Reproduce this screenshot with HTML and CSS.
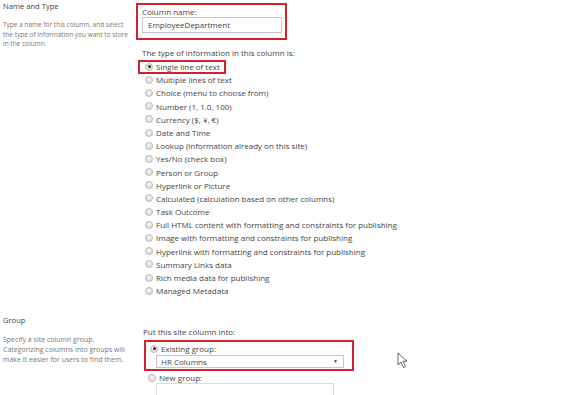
FILE: index.html
```
<!DOCTYPE html>
<html lang="en">
<head>
  <meta charset="UTF-8">
  <title>Create Column</title>
  <link rel="stylesheet" href="styles.css">
</head>
<body>
  <div class="page">
    <!-- name and type -->
    <div class="section">
      <div class="desc">
        <h3 class="descTitle">Name and Type</h3>
        <p class="descText">Type a name for this column, and select the type of information you want to store in the column.</p>
      </div>
      <div class="fields">
        <div class="hl nameBox">
          <div class="fieldLabel">Column name:</div>
          <div class="textInput">EmployeeDepartment</div>
        </div>
        <div class="fieldLabel typeLabel">The type of information in this column is:</div>
        <ul class="radioList">
          <li><span class="hl hlRadio"><span class="radio checked"></span>Single line of text</span></li>
          <li><span class="radio"></span>Multiple lines of text</li>
          <li><span class="radio"></span>Choice (menu to choose from)</li>
          <li><span class="radio"></span>Number (1, 1.0, 100)</li>
          <li><span class="radio"></span>Currency ($, ¥, €)</li>
          <li><span class="radio"></span>Date and Time</li>
          <li><span class="radio"></span>Lookup (information already on this site)</li>
          <li><span class="radio"></span>Yes/No (check box)</li>
          <li><span class="radio"></span>Person or Group</li>
          <li><span class="radio"></span>Hyperlink or Picture</li>
          <li><span class="radio"></span>Calculated (calculation based on other columns)</li>
          <li><span class="radio"></span>Task Outcome</li>
          <li><span class="radio"></span>Full HTML content with formatting and constraints for publishing</li>
          <li><span class="radio"></span>Image with formatting and constraints for publishing</li>
          <li><span class="radio"></span>Hyperlink with formatting and constraints for publishing</li>
          <li><span class="radio"></span>Summary Links data</li>
          <li><span class="radio"></span>Rich media data for publishing</li>
          <li><span class="radio"></span>Managed Metadata</li>
        </ul>
      </div>
    </div>

    <!-- group -->
    <div class="section groupSection">
      <div class="desc">
        <h3 class="descTitle">Group</h3>
        <p class="descText groupText">Specify a site column group. Categorizing columns into groups will make it easier for users to find them.</p>
      </div>
      <div class="fields groupFields">
        <div class="fieldLabel">Put this site column into:</div>
        <div class="hl groupBox">
          <div class="radioRow"><span class="radio checked"></span>Existing group:</div>
          <div class="selectBox">
            <span>HR Columns</span>
            <span class="arrow">&#9660;</span>
          </div>
        </div>
        <div class="radioRow newGroup"><span class="radio"></span>New group:</div>
        <div class="textInput newInput"></div>
      </div>
    </div>
  </div>

  <!-- mouse pointer -->
  <svg class="cursor" width="12" height="17" viewBox="0 0 12 17">
    <path d="M1 1 L1 13 L4 10 L6.5 15.5 L8.5 14.6 L6 9.2 L10 9.2 Z" fill="#fff" stroke="#555" stroke-width="0.9" stroke-linejoin="round" />
  </svg>
</body>
</html>
```

FILE: styles.css
```
body {
  margin: 0;
  background: #fff;
  font-family: "Open Sans", "Noto Sans", sans-serif;
  color: #444;
}

.page {
  width: 575px;
  height: 395px;
  overflow: hidden;
  position: relative;
}

.section {
  display: flex;
}

.desc {
  width: 133px;
  padding-left: 3px;
  flex-shrink: 0;
}

.descTitle {
  margin: 0;
  font-size: 7.6px;
  font-weight: normal;
  color: #444;
  line-height: 10px;
  padding-top: 1px;
}

.descText {
  margin: 9px 0 0 0;
  font-size: 6.5px;
  line-height: 9.7px;
  color: #777;
  width: 126px;
}

.fields {
  padding-top: 3px;
}

.hl {
  border: 2px solid #d2222d;
}

.nameBox {
  height: 37px;
  padding-left: 4px;
  box-sizing: border-box;
  width: 151px;
}

.fieldLabel {
  font-size: 8px;
  line-height: 11px;
}

.nameBox .fieldLabel {
  margin-top: 1px;
}

.textInput {
  width: 140px;
  height: 16px;
  box-sizing: border-box;
  border: 1px solid #c6c6c6;
  font-size: 8px;
  line-height: 14px;
  padding-left: 5px;
  color: #444;
}

.typeLabel {
  margin: 7px 0 0 6px;
}

.radioList {
  list-style: none;
  margin: 2px 0 0 0;
  padding: 0;
  font-size: 8px;
}

.radioList li {
  height: 13.2px;
  line-height: 13.2px;
  padding-left: 9px;
  display: flex;
  align-items: center;
  white-space: nowrap;
}

.radioList li:first-child {
  padding-left: 8px;
}

.hlRadio {
  display: flex;
  align-items: center;
  height: 14px;
  padding: 0 4px 0 5px;
  box-sizing: border-box;
  width: 88px;
  margin-left: -6px;
}

.radio {
  display: inline-block;
  width: 6px;
  height: 6px;
  border: 1px solid #b9b9b9;
  border-radius: 50%;
  background: radial-gradient(circle at 50% 35%, #f4f4f4, #d6d6d6);
  margin-right: 3px;
  flex-shrink: 0;
  position: relative;
}

.radio.checked::after {
  content: "";
  position: absolute;
  left: 1.5px;
  top: 1.5px;
  width: 3px;
  height: 3px;
  border-radius: 50%;
  background: #333;
}

.groupSection {
  margin-top: 17px;
}

.groupText {
  margin-top: 10px;
  font-size: 7px;
  width: 133px;
}

.groupFields {
  padding-top: 12px;
  padding-left: 7px;
}

.groupBox {
  width: 210px;
  box-sizing: border-box;
  height: 31px;
  margin: 3px 0 0 1px;
  padding: 2px 0 0 4px;
}

.radioRow {
  display: flex;
  align-items: center;
  font-size: 8px;
  line-height: 9px;
}

.selectBox {
  margin: 2px 0 0 6px;
  width: 188px;
  height: 13px;
  box-sizing: border-box;
  border: 1px solid #c6c6c6;
  font-size: 8px;
  line-height: 11px;
  padding: 0 5px 0 4px;
  display: flex;
  justify-content: space-between;
}

.arrow {
  font-size: 5px;
}

.newGroup {
  margin: 2px 0 0 5px;
}

.newInput {
  margin: 1px 0 0 13px;
  width: 178px;
  height: 20px;
  border-color: #dcdcdc;
}

.cursor {
  position: absolute;
  left: 397px;
  top: 352px;
}
```
